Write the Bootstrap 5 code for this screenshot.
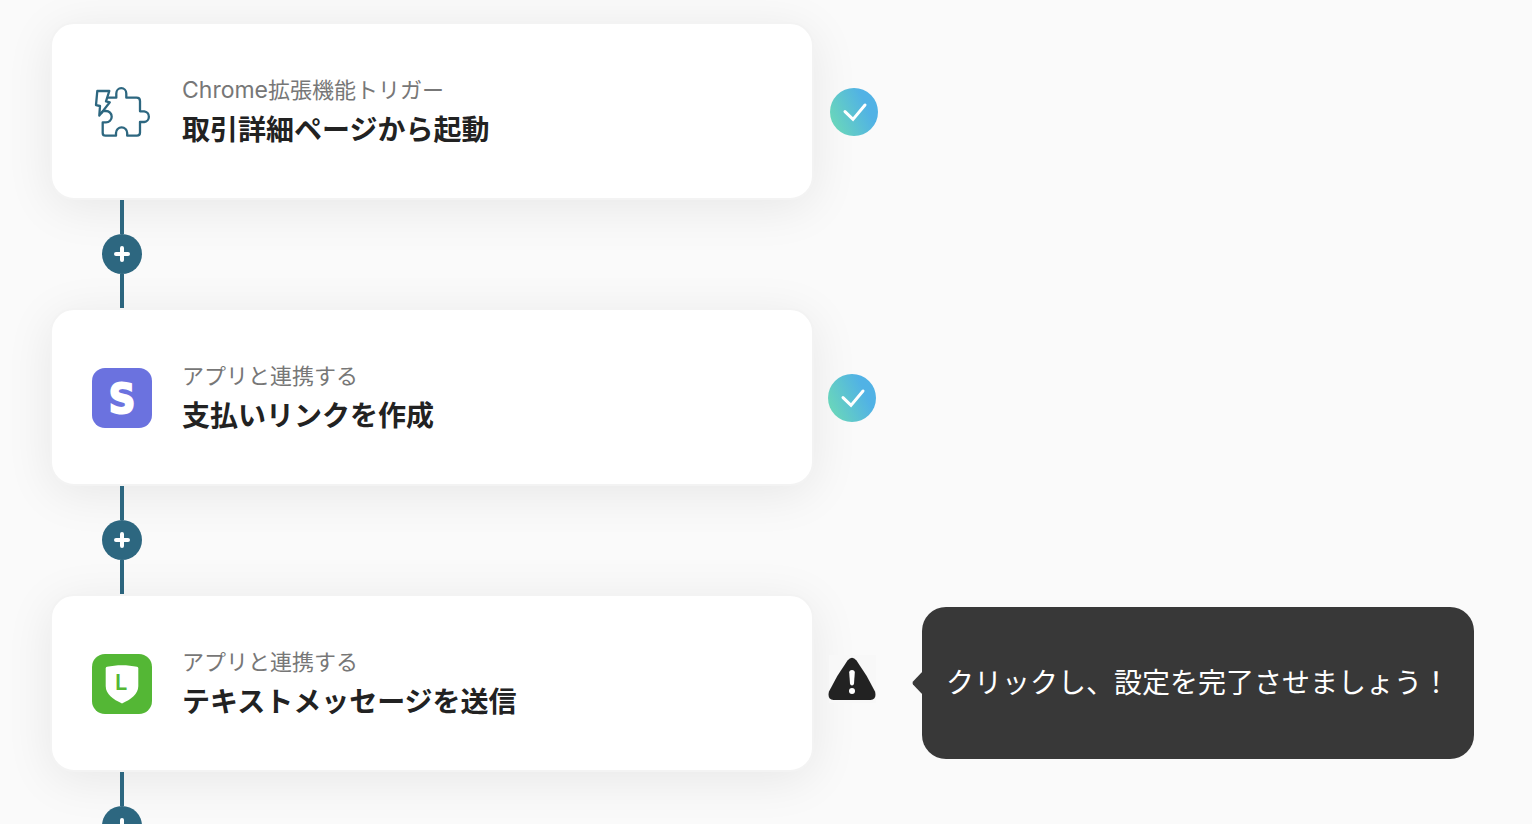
<!DOCTYPE html>
<html lang="ja">
<head>
<meta charset="utf-8">
<meta name="viewport" content="width=device-width, initial-scale=1">
<title>フロー</title>
<link href="https://cdn.jsdelivr.net/npm/bootstrap@5.3.0/dist/css/bootstrap.min.css" rel="stylesheet">
<script src="https://cdn.jsdelivr.net/npm/bootstrap@5.3.0/dist/js/bootstrap.bundle.min.js" defer></script>
<style>
  body { background: #fafafa; color: #222; font-family: Inter, "Noto Sans CJK JP", sans-serif; }
  .flow { padding: 22px 50px 0; }
  .step { gap: 14px; }
  .step-card {
    flex: 0 1 764px; min-height: 178px; padding: 0 40px; gap: 30px;
    background: #fff; border: 2px solid #f3f3f3; border-radius: 24px;
    box-shadow: 0 8px 48px rgba(0, 0, 0, .08); color: inherit;
  }
  .app-icon { width: 60px; height: 60px; flex: none; margin-top: 2px; }
  .step-kind { font-size: 22px; line-height: 36px; margin-bottom: 2px; color: #777; }
  .latin { font-size: 23px; line-height: 1; }
  .step-name { font-size: 28px; line-height: 40px; font-weight: 700; }
  .status { flex: none; margin-top: 2px; }
  .connector { width: 40px; height: 108px; margin-left: 52px; }
  .connector::before, .connector::after { content: ""; flex: 1; width: 4px; background: #2d6780; }
  .add-btn { width: 40px; height: 40px; background: #2d6780; flex: none; }
  .hint { margin-left: 32px; padding: 56px 24px; background: #383838; color: #fff; border-radius: 24px; font-size: 28px; line-height: 40px; }
  .hint-arrow { left: -10px; top: 50%; transform: translateY(-50%); }
</style>
</head>
<body>
<main class="flow vh-100 overflow-hidden">

  <section class="step d-flex align-items-center gap-3">
    <button type="button" class="step-card d-flex align-items-center text-start">
      <svg class="app-icon" viewBox="0 0 60 60" fill="none" stroke="#2d6780" stroke-width="2.3" stroke-linejoin="round" stroke-linecap="round" aria-hidden="true">
        <path d="M5.3 9H17.3L14 19.3L17.8 20.3L7.3 33.6L8 24L4 23.2Z"/>
        <path d="M16.5 15.7H24.3V11.5A5 5.3 0 0 1 34.3 11.5V15.7H44.5Q48 15.7 48 19V29.3H52.2A5.4 5.4 0 0 1 52.2 40H48V50.5Q48 53.7 45 53.7H35.2V51A5.4 5.4 0 0 0 24 51V53.7H13.5Q10.7 53.7 10.7 51V40.4H14A5.7 5.7 0 0 0 14 29H12Q10.5 29 9.5 31"/>
      </svg>
      <span class="d-block">
        <span class="step-kind d-block"><span class="latin">Chrome</span>拡張機能トリガー</span>
        <span class="step-name d-block">取引詳細ページから起動</span>
      </span>
    </button>
    <svg class="status" width="48" height="48" viewBox="0 0 48 48" role="img" aria-label="設定済み">
      <defs><linearGradient id="done" x1="0.08" y1="0.7" x2="0.85" y2="0.35"><stop stop-color="#68d4bd"/><stop offset="0.9" stop-color="#51b2e5"/></linearGradient></defs>
      <circle cx="24" cy="24" r="24" fill="url(#done)"/>
      <path d="M15 23.6L23 31.4L35 17" fill="none" stroke="#fff" stroke-width="3" stroke-linecap="round"/>
    </svg>
  </section>

  <div class="connector d-flex flex-column align-items-center">
    <button type="button" class="add-btn btn rounded-circle border-0 p-0 d-flex align-items-center justify-content-center" aria-label="追加">
      <svg width="16" height="16" viewBox="0 0 16 16" stroke="#fff" stroke-width="4" stroke-linecap="round"><path d="M8 2V14M2 8H14"/></svg>
    </button>
  </div>

  <section class="step d-flex align-items-center">
    <button type="button" class="step-card d-flex align-items-center text-start">
      <svg class="app-icon" viewBox="0 0 60 60" aria-hidden="true">
        <rect width="60" height="60" rx="13" fill="#6b72df"/>
        <text x="30" y="45" text-anchor="middle" font-family="DejaVu Sans Condensed, DejaVu Sans, sans-serif" font-weight="700" font-size="41" fill="#fff" stroke="#fff" stroke-width="2">S</text>
      </svg>
      <span class="d-block">
        <span class="step-kind d-block">アプリと連携する</span>
        <span class="step-name d-block">支払いリンクを作成</span>
      </span>
    </button>
    <svg class="status" width="48" height="48" viewBox="0 0 48 48" role="img" aria-label="設定済み">
      <circle cx="24" cy="24" r="24" fill="url(#done)"/>
      <path d="M15 23.6L23 31.4L35 17" fill="none" stroke="#fff" stroke-width="3" stroke-linecap="round"/>
    </svg>
  </section>

  <div class="connector d-flex flex-column align-items-center">
    <button type="button" class="add-btn btn rounded-circle border-0 p-0 d-flex align-items-center justify-content-center" aria-label="追加">
      <svg width="16" height="16" viewBox="0 0 16 16" stroke="#fff" stroke-width="4" stroke-linecap="round"><path d="M8 2V14M2 8H14"/></svg>
    </button>
  </div>

  <section class="step d-flex align-items-center">
    <button type="button" class="step-card d-flex align-items-center text-start">
      <svg class="app-icon" viewBox="0 0 60 60" aria-hidden="true">
        <rect width="60" height="60" rx="13" fill="#54b735"/>
        <path d="M13.7 14.4Q13.7 13.2 15 12.8C24 10.6 36 10.6 45 12.8Q46.3 13.2 46.3 14.4V32C46.3 40 39 45.5 30 49.4C21 45.5 13.7 40 13.7 32Z" fill="#fff"/>
        <text x="23" y="36" font-family="Inter" font-weight="600" font-size="22" fill="#54b735">L</text>
      </svg>
      <span class="d-block">
        <span class="step-kind d-block">アプリと連携する</span>
        <span class="step-name d-block">テキストメッセージを送信</span>
      </span>
    </button>
    <svg class="status" width="48" height="58" viewBox="0 0 48 58" role="img" aria-label="未設定">
      <rect x="1" width="47" height="48" fill="#f8f8f8"/>
      <path d="M19.5 5.5Q24 0 28.5 5.5Q39 20 47 36.5Q49 44.5 42.5 45H5.5Q-1 44.5 1 36.5Q9 20 19.5 5.5Z" fill="#222"/>
      <path d="M21.2 17.5Q21.2 15 24 15Q26.8 15 26.8 17.5L26 28.5Q25.7 30.5 24 30.5Q22.3 30.5 22 28.5Z" fill="#fff"/>
      <circle cx="24" cy="36" r="3" fill="#fff"/>
    </svg>
    <div class="hint position-relative text-nowrap" role="status">
      <svg class="hint-arrow position-absolute" width="11" height="24" viewBox="0 0 11 24" aria-hidden="true"><path d="M11 0L1 10.5Q0 12 1 13.5L11 24Z" fill="#383838"/></svg>
      クリックし、設定を完了させましょう！
    </div>
  </section>

  <div class="connector d-flex flex-column align-items-center">
    <button type="button" class="add-btn btn rounded-circle border-0 p-0 d-flex align-items-center justify-content-center" aria-label="追加">
      <svg width="16" height="16" viewBox="0 0 16 16" stroke="#fff" stroke-width="4" stroke-linecap="round"><path d="M8 2V14M2 8H14"/></svg>
    </button>
  </div>

</main>
</body>
</html>
